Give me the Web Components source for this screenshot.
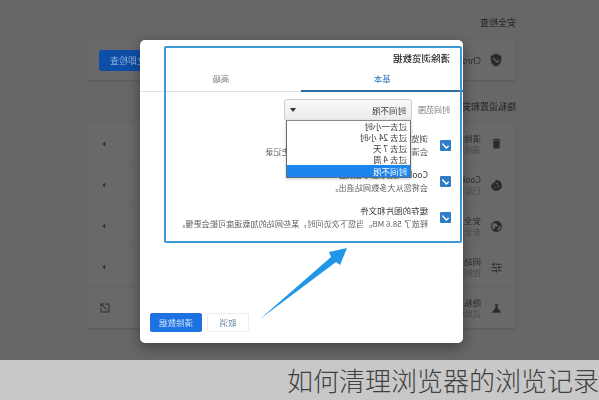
<!DOCTYPE html>
<html lang="zh-CN">
<head>
<meta charset="utf-8">
<style>
html,body{margin:0;padding:0;width:599px;height:400px;overflow:hidden;background:#676767}
body{font-family:"Noto Sans CJK SC","Liberation Sans",sans-serif}
</style>
</head>
<body>
<x-screen></x-screen>
<script>
const FONT = '"Noto Sans CJK SC","Liberation Sans",sans-serif';
const ICONS = {
  shield:'M12 1L3 5v6c0 5.55 3.84 10.74 9 12 5.16-1.26 9-6.45 9-12V5l-9-4zm-2 16l-4-4 1.41-1.41L10 14.17l6.59-6.59L18 9l-8 8z',
  trash:'M6 19c0 1.1.9 2 2 2h8c1.1 0 2-.9 2-2V7H6v12zM19 4h-3.5l-1-1h-5l-1 1H5v2h14V4z',
  cookie:'M21.95 10.99c-1.79-.03-3.7-1.95-2.68-4.22-2.97 1-5.78-1.59-5.19-4.56C7.11.74 2 6.41 2 12c0 5.52 4.48 10 10 10 5.89 0 10.54-5.08 9.95-11.01zM8.5 15c-.83 0-1.5-.67-1.5-1.5S7.67 12 8.5 12s1.5.67 1.5 1.5S9.33 15 8.5 15zm2-5C9.67 10 9 9.33 9 8.5S9.67 7 10.5 7s1.5.67 1.5 1.5-.67 1.5-1.5 1.5zm4.5 6c-.55 0-1-.45-1-1s.45-1 1-1 1 .45 1 1-.45 1-1 1z',
  globe:'M12 2C6.48 2 2 6.48 2 12s4.48 10 10 10 10-4.48 10-10S17.52 2 12 2zm-1 17.93c-3.95-.49-7-3.85-7-7.93 0-.62.08-1.21.21-1.79L9 15v1c0 1.1.9 2 2 2v1.93zm6.9-2.54c-.26-.81-1-1.39-1.9-1.39h-1v-3c0-.55-.45-1-1-1H8v-2h2c.55 0 1-.45 1-1V7h2c1.1 0 2-.9 2-2v-.41c2.93 1.19 5 4.06 5 7.41 0 2.08-.8 3.97-2.1 5.39z',
  tune:'M3 17v2h6v-2H3zM3 5v2h10V5H3zm10 16v-2h8v-2h-8v-2h-2v6h2zM7 9v2H3v2h4v2h2V9H7zm14 4v-2H11v2h10zm-6-4h2V7h4V5h-4V3h-2v6z',
  flask:'M19.8 18.4L14 10.67V6.5l1.35-1.69c.26-.33.03-.81-.39-.81H9.04c-.42 0-.65.48-.39.81L10 6.5v4.17L4.2 18.4c-.49.66-.02 1.6.8 1.6h14c.82 0 1.29-.94.8-1.6z',
  open:'M19 19H5V5h7V3H5c-1.11 0-2 .9-2 2v14c0 1.1.89 2 2 2h14c1.1 0 2-.9 2-2v-7h-2v7zM14 3v2h3.59l-9.83 9.83 1.41 1.41L19 6.41V10h2V3h-7z',
  caret:'M9 6l7 6-7 6z'
};
const svgIcon = (n,s,c) => `<svg width="${s}" height="${s}" viewBox="0 0 24 24" fill="${c}"><path d="${ICONS[n]}"/></svg>`;

function define(tag, html, init){
  customElements.define(tag, class extends HTMLElement{
    connectedCallback(){
      if(this.shadowRoot) return;
      const r=this.attachShadow({mode:'open'});
      r.innerHTML = typeof html==='function' ? html(this) : html;
      if(init) init(this,r);
    }
  });
}

define('x-section-title',`<style>
:host{display:block;font:500 9px/12px ${FONT};color:#2c2c2c;height:12px;white-space:nowrap}
</style><slot></slot>`);

define('x-card',`<style>
:host{display:block;background:#696969;box-shadow:0 1px 2px rgba(0,0,0,.12)}
</style><slot></slot>`);

define('x-row',el=>`<style>
:host{display:flex;align-items:center;height:41px;box-sizing:border-box;padding:0 12px 0 13px;border-top:1px solid #646464}
:host(:first-child){border-top:0}
.ic{width:13px;height:13px;display:flex;margin-right:9px;flex:none}
.txt{flex:1;min-width:0;white-space:nowrap;overflow:hidden}
.t{font:400 8.5px/12px ${FONT};color:#2b2b2b}
.s{font:400 8px/12px ${FONT};color:#4b4b4b}
.end{flex:none;display:flex}
</style>
<span class="ic">${svgIcon(el.getAttribute('icon'),13,'#2b2b2b')}</span>
<span class="txt"><div class="t">${el.getAttribute('t')}</div><div class="s">${el.getAttribute('s')}</div></span>
<span class="end">${el.hasAttribute('ext')?svgIcon('open',12,'#2f2f2f'):svgIcon('caret',10,'#2f2f2f')}</span>`);

define('x-safety-row',el=>`<style>
:host{display:flex;align-items:center;height:40px;box-sizing:border-box;padding:0 12px 0 13px}
.ic{width:14px;height:14px;margin-right:8px;display:flex;flex:none}
.t{flex:1;font:400 8.5px/12px ${FONT};color:#2b2b2b;white-space:nowrap}
.b{flex:none;width:58px;height:21px;background:#0d4ea6;border-radius:3px;color:#8fb0e0;font:400 9px/21px ${FONT};text-align:center}
</style>
<span class="ic">${svgIcon('shield',14,'#2b2b2b')}</span>
<span class="t">Chrome 可帮您保护数据</span><span class="b">立即检查</span>`);

define('x-settings',`<style>
:host{display:block;width:429px;padding:17px 0 0 83px}
.a{margin-top:11px}
.b{margin-top:10px}
.gap{height:21px}
</style>
<x-section-title>安全检查</x-section-title>
<x-card class="a"><x-safety-row></x-safety-row></x-card>
<div class="gap"></div>
<x-section-title>隐私设置和安全性</x-section-title>
<x-card class="b">
<x-row icon="trash" t="清除浏览数据" s="清除浏览记录、Cookie、缓存等数据"></x-row>
<x-row icon="cookie" t="Cookie 及其他网站数据" s="已阻止无痕模式下的第三方 Cookie"></x-row>
<x-row icon="globe" t="安全" s="安全浏览（保护您免受危险网站的侵害）"></x-row>
<x-row icon="tune" t="网站设置" s="控制网站可以使用和显示的信息"></x-row>
<x-row icon="flask" t="隐私沙盒" s="试用版功能已开启" ext></x-row>
</x-card>`);

define('x-tabs',`<style>
:host{display:flex;height:28px;box-sizing:border-box;border-bottom:1px solid #e2e2e2}
.tab{flex:1;text-align:center;font:400 8.5px/28px ${FONT};color:#7c7c7c;box-sizing:border-box;height:28px}
.on{color:#2b78ba;border-bottom:2px solid #2a6ea6}
</style><div class="tab on">基本</div><div class="tab">高级</div>`);

define('x-select',`<style>
:host{display:block;position:relative;width:128px;height:22px;box-sizing:border-box;border:1px solid #c3ccd6;border-radius:3px;background:linear-gradient(#f8f8f8,#ececec)}
.v{display:flex;align-items:center;justify-content:space-between;height:100%;padding:0 5px;font:400 8.5px/20px ${FONT};color:#3a3a3a}
.car{width:0;height:0;border-left:3.5px solid transparent;border-right:3.5px solid transparent;border-top:4px solid #333}
.menu{position:absolute;left:0;top:20px;width:125px;box-sizing:border-box;background:#fff;border:1px solid #5d6f80;border-top-color:#8a8a8a;box-shadow:0 1px 3px rgba(0,0,0,.22);z-index:3}
.o{height:11px;font:400 8.5px/11px ${FONT};color:#3a3a3a;padding-left:3px;white-space:pre}
.sel{background:#1e85ec;color:#fff;height:12px;line-height:12px}
</style>
<div class="v"><span>时间不限</span><span class="car"></span></div>
<div class="menu"><div class="o">过去一小时</div><div class="o">过去 24 小时</div><div class="o">过去 7 天</div><div class="o">过去 4 周</div><div class="o sel">时间不限</div></div>`);

define('x-check-row',el=>`<style>
:host{display:flex;align-items:center;height:26px;margin-top:10px;padding-left:12px}
.box{flex:none;width:11px;height:11px;background:#2f7cc6;border-radius:1px;margin-right:12px;display:flex;align-items:center;justify-content:center}
.txt{white-space:nowrap}
.t{font:400 8.5px/13px ${FONT};color:#333}
.s{font:400 8.15px/13px ${FONT};color:#5e5e5e}
</style>
<span class="box"><svg width="9" height="9" viewBox="0 0 10 10" fill="none" stroke="#fff" stroke-width="1.6"><path d="M1.5 5.2L4 7.7 8.6 2.8"/></svg></span>
<span class="txt"><div class="t">${el.getAttribute('t')}</div><div class="s">${el.getAttribute('s')}</div></span>`);

define('x-button',el=>`<style>
:host{display:block;height:19px;box-sizing:border-box;border-radius:2px;text-align:center;font:400 8.5px/19px ${FONT};width:42px;background:#fff;color:#6d85a3;box-shadow:0 0 0 1px #eeeeee inset}
:host([primary]){width:52px;background:#1c72e0;color:#cfe2fa;box-shadow:none}
</style><slot></slot>`);

define('x-dialog',`<style>
:host{display:flex;flex-direction:column;position:absolute;left:136px;top:40px;width:323px;height:303px;box-sizing:border-box;background:#fff;border-radius:5px;box-shadow:0 4px 14px rgba(0,0,0,.38);overflow:hidden}
.title{height:12px;margin:12px 0 0 13px;font:500 9.5px/12px ${FONT};color:#2a2a2a}
.range{display:flex;align-items:center;margin-top:7px;padding-left:13px}
.label{width:38px;font:400 8px/22px ${FONT};color:#777;white-space:nowrap}
.rows{margin-top:1px}
.foot{margin-top:auto;display:flex;justify-content:flex-end;gap:5px;padding:0 10px 11px 0}
</style>
<div class="title">清除浏览数据</div>
<x-tabs></x-tabs>
<div class="range"><span class="label">时间范围</span><x-select></x-select></div>
<div class="rows">
<x-check-row t="浏览记录" s="会清除您已登录的所有同步设备中的历史记录"></x-check-row>
<x-check-row t="Cookie 及其他网站数据" s="会将您从大多数网站退出。"></x-check-row>
<x-check-row t="缓存的图片和文件" s="释放了 58.6 MB。当您下次访问时，某些网站的加载速度可能会更慢。"></x-check-row>
</div>
<div class="foot"><x-button>取消</x-button><x-button primary>清除数据</x-button></div>`);

define('x-annotation',`<style>
:host{display:block;position:absolute;inset:0;pointer-events:none}
.box{position:absolute;left:137px;top:46px;width:298px;height:197px;box-sizing:border-box;border:2px solid #3b9ad4;border-radius:2px}
svg{position:absolute;left:0;top:0}
</style>
<div class="box"></div>
<svg width="599" height="360" viewBox="0 0 599 360"><polygon fill="#2096e6" points="339,319 268,257 270,252 252,248 259,265 263,262"/></svg>`);

define('x-caption',`<style>
:host{display:block;height:40px;background:#c8c8c8;text-align:right;overflow:hidden;white-space:nowrap;font:300 26px/40px ${FONT};color:#404040}
</style><slot></slot>`);

define('x-screen',`<style>
:host{display:flex;flex-direction:column;width:599px;height:400px;overflow:hidden}
.stage{position:relative;height:360px;width:599px;flex:none;overflow:hidden;background:#676767;transform:scaleX(-1);filter:blur(.45px)}
</style>
<div class="stage">
<x-settings></x-settings>
<x-dialog></x-dialog>
<x-annotation></x-annotation>
</div>
<x-caption>如何清理浏览器的浏览记录</x-caption>`);
</script>
</body>
</html>
